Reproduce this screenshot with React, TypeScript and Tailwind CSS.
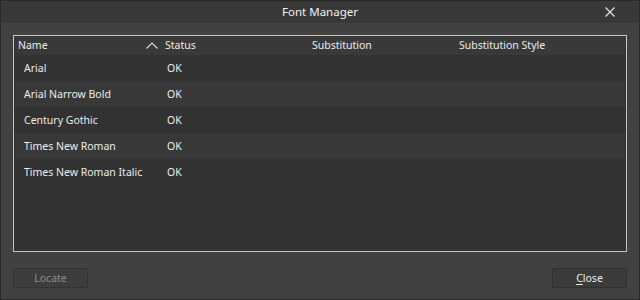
import React from 'react';

const fonts = ['Arial', 'Arial Narrow Bold', 'Century Gothic', 'Times New Roman', 'Times New Roman Italic'];

const App: React.FC = () => {
  return (
    <div
      className="w-[640px] h-[300px] bg-[#414141] border border-[#2a2a2a] flex flex-col text-[10.5px] text-[#ececec]"
      style={{ fontFamily: '"Noto Sans", "Open Sans", sans-serif' }}
    >
      {/* title bar */}
      <div className="h-[22px] bg-[#393939] flex items-center relative shrink-0">
        <span className="flex-1 text-center text-[11.5px] text-[#f0f0f0] leading-none">Font Manager</span>
        <svg className="absolute right-[24px] top-[6px] w-[10px] h-[10px]" viewBox="0 0 10 10" fill="none" stroke="#e0e0e0" strokeWidth={1.3}>
          <path d="M0.5 0.5 L9.5 9.5 M9.5 0.5 L0.5 9.5" />
        </svg>
      </div>

      <div className="flex-1 flex flex-col px-[12px] pt-[12px] pb-[11px]">
        {/* table */}
        <div className="h-[217px] border border-[#c4c4c4] bg-[#323232] flex flex-col">
          <div className="h-[19px] bg-[#393939] flex items-center leading-none shrink-0">
            <div className="w-[132px] pl-[4px]">Name</div>
            <svg className="w-[12px] h-[7px] mr-[7px]" viewBox="0 0 12 7" fill="none" stroke="#d8d8d8" strokeWidth={1.2}>
              <path d="M0.5 6.5 L6 1 L11.5 6.5" />
            </svg>
            <div className="w-[147px]">Status</div>
            <div className="w-[147px]">Substitution</div>
            <div>Substitution Style</div>
          </div>
          {fonts.map((f, i) => (
            <div
              key={f}
              className={`h-[26px] flex items-center leading-none ${i % 2 === 1 ? 'bg-[#383838]' : 'bg-[#323232]'}`}
            >
              <div className="w-[153px] pl-[10px]">{f}</div>
              <div>OK</div>
            </div>
          ))}
        </div>

        {/* buttons */}
        <div className="mt-[16px] flex justify-between">
          <button className="w-[75px] h-[20px] rounded-[2px] border border-[#333333] bg-[#3d3d3d] text-[#8c8c8c] leading-none">
            Locate
          </button>
          <button className="w-[75px] h-[20px] rounded-[2px] border border-[#303030] bg-[#3b3b3b] text-[#ececec] leading-none">
            <span className="underline underline-offset-2">C</span>lose
          </button>
        </div>
      </div>
    </div>
  );
};

export default App;
